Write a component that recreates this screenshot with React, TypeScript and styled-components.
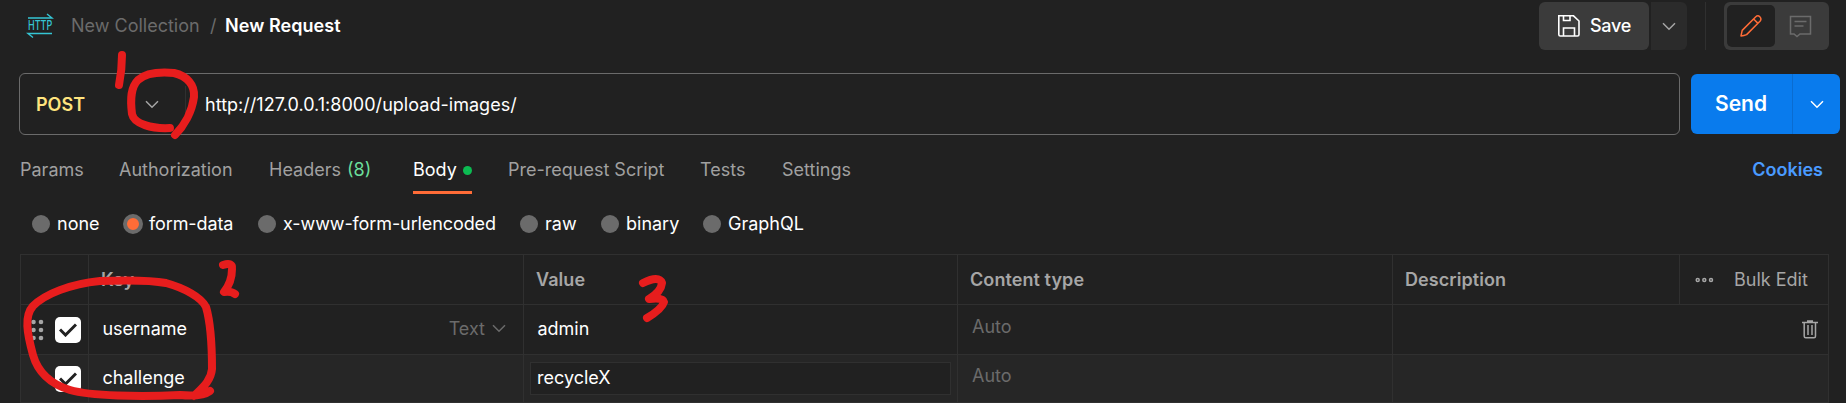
import React from "react";
import styled, { createGlobalStyle } from "styled-components";

const GlobalStyle = createGlobalStyle`
  *, *::before, *::after { box-sizing: border-box; }
  html, body { margin: 0; background: #212121; }
  body { overflow: hidden; }
`;

const Page = styled.main`
  position: relative;
  width: 1846px;
  height: 403px;
  overflow: hidden;
  background: #212121;
  color: #fff;
  font: 400 18px/24px Inter, sans-serif;
  white-space: nowrap;
`;

const Header = styled.header`
  display: flex;
  height: 50px;
  padding: 2px 17px 0 28px;
`;

const Breadcrumb = styled.nav`
  display: flex;
  flex: 1;
  align-items: center;
  height: 48px;
`;

const Crumb = styled.span<{ $width?: number; $current?: boolean }>`
  width: ${(p) => (p.$width ? `${p.$width}px` : "auto")};
  color: ${(p) => (p.$current ? "#fff" : "#6b6b6b")};
  font-weight: ${(p) => (p.$current ? 600 : 400)};
  letter-spacing: ${(p) => (p.$current ? "0.06px" : "0")};
`;

const HttpIcon = styled.svg`
  flex: none;
  width: 26px;
  height: 26px;
  margin-right: 17px;
  overflow: visible;
`;

const HeaderActions = styled.div`
  display: flex;
  align-items: flex-start;
`;

const SaveButton = styled.button`
  display: flex;
  align-items: center;
  gap: 9px;
  width: 110px;
  height: 48px;
  padding: 0 0 0 18px;
  border: 0;
  border-radius: 6px;
  background: #3b3b3b;
  color: #fff;
  font: 500 18px/24px Inter, sans-serif;
  letter-spacing: -0.3px;
`;

const SaveMenuButton = styled.button`
  display: grid;
  place-items: center;
  width: 36px;
  height: 48px;
  margin-left: 2px;
  padding: 0;
  border: 0;
  border-radius: 0 6px 6px 0;
  background: #2b2b2b;
`;

const HeaderDivider = styled.i`
  width: 1px;
  height: 48px;
  margin: 0 18px;
  background: #303030;
`;

const ModeSwitch = styled.div`
  display: flex;
  width: 105px;
  height: 48px;
  padding: 3px;
  border-radius: 6px;
  background: #3b3b3b;
`;

const ModeButton = styled.button<{ $active?: boolean }>`
  display: grid;
  place-items: center;
  width: ${(p) => (p.$active ? 48 : 52)}px;
  height: 42px;
  padding: 0;
  border: 0;
  border-radius: 5px;
  background: ${(p) => (p.$active ? "#212121" : "transparent")};
`;

const RequestBar = styled.section`
  display: flex;
  gap: 11px;
  height: 62px;
  margin: 23px 6px 0 19px;
`;

const UrlBox = styled.div`
  display: flex;
  align-items: center;
  width: 1661px;
  height: 62px;
  padding-left: 16px;
  border: 1px solid #6b6b6b;
  border-radius: 6px;
`;

const Method = styled.div`
  display: flex;
  align-items: center;
  width: 150px;
  height: 36px;
  border-right: 1px solid #303030;
  color: #ffe47e;
  font-weight: 600;
`;

const MethodName = styled.span`
  width: 109px;
  padding-top: 1px;
`;

const UrlText = styled.span`
  margin-left: 19px;
  padding-top: 2px;
  letter-spacing: 0.03px;
`;

const SendGroup = styled.div`
  display: flex;
  width: 149px;
  height: 60px;
  margin-top: 1px;
  overflow: hidden;
  border-radius: 6px;
  background: #097bed;
`;

const SendButton = styled.button`
  width: 101px;
  padding: 0 1px 0 0;
  border: 0;
  background: transparent;
  color: #fff;
  font: 600 21px/24px Inter, sans-serif;
`;

const SendMenuButton = styled.button`
  display: grid;
  flex: 1;
  place-items: center;
  padding: 0;
  border: 0;
  border-left: 1px solid #0a6cd0;
  background: transparent;
`;

const TabBar = styled.nav`
  display: flex;
  height: 59px;
  padding: 23px 0 0 20px;
`;

const Tab = styled.div<{ $slot: number }>`
  width: ${(p) => p.$slot}px;
  color: #a0a0a0;
`;

const TabCount = styled.span`
  margin-left: 6px;
  color: #6bdd9a;
`;

const ActiveTab = styled.div`
  display: flex;
  align-items: center;
  justify-content: space-between;
  width: 59px;
  height: 36px;
  margin-right: 36px;
  padding-bottom: 9px;
  border-bottom: 3px solid #ff6c37;
`;

const ChangedDot = styled.i`
  width: 9px;
  height: 9px;
  border-radius: 50%;
  background: #0cbb52;
`;

const Cookies = styled.a`
  margin-left: auto;
  padding-right: 23px;
  color: #4a9bff;
  font-weight: 600;
`;

const BodyTypes = styled.div`
  display: flex;
  align-items: center;
  height: 60px;
  padding-left: 32px;
`;

const BodyType = styled.label<{ $slot: number; $tight?: boolean }>`
  display: flex;
  align-items: center;
  gap: 7px;
  width: ${(p) => p.$slot}px;
  letter-spacing: ${(p) => (p.$tight ? "-0.1px" : "0")};
`;

const Radio = styled.i<{ $checked?: boolean }>`
  flex: none;
  width: ${(p) => (p.$checked ? 20 : 18)}px;
  height: ${(p) => (p.$checked ? 20 : 18)}px;
  margin: ${(p) => (p.$checked ? "0 -1px" : "0")};
  border: ${(p) => (p.$checked ? "4px solid #6b6b6b" : "0")};
  border-radius: 50%;
  background: ${(p) => (p.$checked ? "#ff6c37" : "#6b6b6b")};
`;

const Table = styled.section`
  width: 1809px;
  margin-left: 20px;
  border: 1px solid #303030;
  border-bottom: 0;
`;

const Row = styled.div<{ $height: number; $shaded?: boolean; $trailing?: boolean }>`
  display: grid;
  grid-template-columns: 68px 435px 434px 435px ${(p) => (p.$trailing ? "287px 1fr" : "1fr")};
  height: ${(p) => p.$height}px;
  border-bottom: 1px solid #303030;
  background: ${(p) => (p.$shaded ? "#262626" : "#212121")};
`;

const Cell = styled.div<{ $last?: boolean; $pad?: number; $tone?: string; $bold?: boolean; $lift?: number }>`
  display: flex;
  align-items: center;
  padding: 0 0 ${(p) => p.$lift ?? 0}px ${(p) => p.$pad ?? 0}px;
  border-right: ${(p) => (p.$last ? "0" : "1px solid #303030")};
  color: ${(p) => p.$tone ?? "#fff"};
  font-weight: ${(p) => (p.$bold ? 600 : 400)};
  letter-spacing: ${(p) => (p.$bold ? "0.08px" : "0")};
`;

const HandleSlot = styled.span`
  display: flex;
  width: 24px;
  height: 22px;
`;

const Checkbox = styled.span`
  display: grid;
  place-items: center;
  width: 26px;
  height: 26px;
  border-radius: 5px;
  background: #fff;
`;

const FieldType = styled.span`
  display: flex;
  align-items: center;
  gap: 7px;
  margin-left: auto;
  padding-right: 17px;
  color: #6b6b6b;
`;

const ValueInput = styled.div`
  display: flex;
  align-items: center;
  width: 421px;
  height: 33px;
  padding-left: 6px;
  border: 1px solid #303030;
  background: #212121;
`;

const BulkEdit = styled.span`
  margin-left: 20px;
`;

const Trash = styled.svg`
  margin: 0 10px 0 auto;
`;

const Annotations = styled.svg`
  position: absolute;
  inset: 0;
  pointer-events: none;
`;

const Chevron = ({ color = "#a6a6a6" }: { color?: string }) => (
  <svg width="14" height="9" viewBox="0 0 14 9" fill="none" stroke={color} strokeWidth="1.5">
    <path d="M1 1.2 7 7.2 13 1.2" />
  </svg>
);

const Check = () => (
  <svg width="18" height="14" viewBox="0 0 18 14" fill="none" stroke="#212121" strokeWidth="3">
    <path d="M1 6.5 6.5 12 17 1.5" />
  </svg>
);

const DragHandle = () => (
  <svg width="14" height="22" viewBox="0 0 14 22" fill="#a6a6a6">
    {[3, 11, 19].map((y) => (
      <React.Fragment key={y}>
        <circle cx="2.5" cy={y} r="2.3" />
        <circle cx="10" cy={y} r="2.3" />
      </React.Fragment>
    ))}
  </svg>
);

const bodyTypes = [
  { name: "none", slot: 92 },
  { name: "form-data", slot: 134, checked: true, tight: true },
  { name: "x-www-form-urlencoded", slot: 262, tight: true },
  { name: "raw", slot: 81 },
  { name: "binary", slot: 102 },
  { name: "GraphQL", slot: 110 },
];

export default function App() {
  return (
    <Page>
      <GlobalStyle />
      <Header>
        <Breadcrumb>
          <HttpIcon viewBox="0 0 26 26" fill="none" stroke="#35c5d4" strokeWidth="1.4">
            <path d="M0 5H24L19 1M24 20.5H0L5 24.5" />
            <text
              transform="translate(0 17.4) scale(0.72 1)"
              fill="#35c5d4"
              stroke="none"
              fontSize="12.5"
              fontWeight="500"
            >
              HTTP
            </text>
          </HttpIcon>
          <Crumb $width={139}>New Collection</Crumb>
          <Crumb $width={15}>/</Crumb>
          <Crumb $current>New Request</Crumb>
        </Breadcrumb>
        <HeaderActions>
          <SaveButton>
            <svg width="24" height="24" viewBox="0 0 24 24" fill="none" stroke="#fff" strokeWidth="1.6">
              <path d="M2 1.8H16.5L22 7V20.5Q22 22 20.5 22H3.3Q1.8 22 1.8 20.5V1.8ZM6.5 2V6.5H13V2M6.5 22V14H17.5V22" />
            </svg>
            Save
          </SaveButton>
          <SaveMenuButton><Chevron /></SaveMenuButton>
          <HeaderDivider />
          <ModeSwitch>
            <ModeButton $active>
              <svg width="24" height="24" viewBox="0 0 24 24" fill="none" stroke="#ff6c37" strokeWidth="1.5" strokeLinejoin="round">
                <path d="M2 22 3.2 16.4 16.8 2.8Q18.8.8 20.8 2.8T21.2 7L7.6 20.6Q5 21.6 2 22ZM14.6 5 19 9.4" />
              </svg>
            </ModeButton>
            <ModeButton>
              <svg width="24" height="24" viewBox="0 0 24 24" fill="none" stroke="#6b6b6b" strokeWidth="1.5">
                <path d="M2.5 2.5H22.5V20H12L9 22.5 6 20H2.5ZM6.5 7.5H18.5M6.5 12H15.5" />
              </svg>
            </ModeButton>
          </ModeSwitch>
        </HeaderActions>
      </Header>

      <RequestBar>
        <UrlBox>
          <Method>
            <MethodName>POST</MethodName>
            <Chevron />
          </Method>
          <UrlText>http://127.0.0.1:8000/upload-images/</UrlText>
        </UrlBox>
        <SendGroup>
          <SendButton>Send</SendButton>
          <SendMenuButton><Chevron color="#fff" /></SendMenuButton>
        </SendGroup>
      </RequestBar>

      <TabBar>
        <Tab $slot={99}>Params</Tab>
        <Tab $slot={150}>Authorization</Tab>
        <Tab $slot={144}>Headers<TabCount>(8)</TabCount></Tab>
        <ActiveTab>Body<ChangedDot /></ActiveTab>
        <Tab $slot={192}>Pre-request Script</Tab>
        <Tab $slot={82}>Tests</Tab>
        <Tab $slot={80}>Settings</Tab>
        <Cookies>Cookies</Cookies>
      </TabBar>

      <BodyTypes>
        {bodyTypes.map((t) => (
          <BodyType key={t.name} $slot={t.slot} $tight={t.tight}>
            <Radio $checked={t.checked} />
            {t.name}
          </BodyType>
        ))}
      </BodyTypes>

      <Table>
        <Row $height={50} $trailing>
          <Cell />
          <Cell $pad={12} $tone="#a6a6a6" $bold>Key</Cell>
          <Cell $pad={12} $tone="#a6a6a6" $bold>Value</Cell>
          <Cell $pad={12} $tone="#a6a6a6" $bold>Content type</Cell>
          <Cell $pad={12} $tone="#a6a6a6" $bold>Description</Cell>
          <Cell $pad={15} $tone="#a6a6a6" $last>
            <svg width="19" height="6" viewBox="0 0 19 6" fill="none" stroke="#a6a6a6" strokeWidth="1.5">
              <circle cx="2.7" cy="3" r="1.5" />
              <circle cx="9.3" cy="3" r="1.5" />
              <circle cx="16" cy="3" r="1.5" />
            </svg>
            <BulkEdit>Bulk Edit</BulkEdit>
          </Cell>
        </Row>
        <Row $height={50}>
          <Cell $pad={10}>
            <HandleSlot><DragHandle /></HandleSlot>
            <Checkbox><Check /></Checkbox>
          </Cell>
          <Cell $pad={13.4} $lift={2}>
            username
            <FieldType>Text<Chevron color="#6b6b6b" /></FieldType>
          </Cell>
          <Cell $pad={13.4} $lift={2}>admin</Cell>
          <Cell $pad={14} $tone="#6b6b6b" $lift={5}>Auto</Cell>
          <Cell $last>
            <Trash width="16" height="19" viewBox="0 0 16 19" fill="none" stroke="#a6a6a6" strokeWidth="1.5">
              <path d="M0 2.5H16M5 1H11M2.2 3V16.3Q2.2 17.8 3.7 17.8H12Q13.5 17.8 13.5 16.3V3M6 5V15M10 5V15" />
            </Trash>
          </Cell>
        </Row>
        <Row $height={48} $shaded>
          <Cell $pad={10}>
            <HandleSlot />
            <Checkbox><Check /></Checkbox>
          </Cell>
          <Cell $pad={13.4} $lift={1}>challenge</Cell>
          <Cell $pad={6} $lift={1}><ValueInput>recycleX</ValueInput></Cell>
          <Cell $pad={14} $tone="#6b6b6b" $lift={5}>Auto</Cell>
          <Cell $last />
        </Row>
      </Table>

      <Annotations width="1846" height="403" fill="none" stroke="#e71d1d" strokeWidth="8" strokeLinecap="round" strokeLinejoin="round">
        <path d="M122 55Q122 70 119 85" />
        <path d="M170 128C152 129 134 124 132 114C130 98 131 87 138 80C147 72 163 72 174 73C187 76 195 85 194 97C192 112 184 126 175 135" />
        <path d="M223 265Q233 262 232 269Q232 282 224 292Q231 291 235 294" />
        <path d="M210 391Q202 397 180 395C140 397 90 396 70 390C47 383 37 369 33 355C27 333 24 316 33 306C45 294 70 284 100 281C126 280 150 280 166 283C184 288 201 297 206 307C211 324 212 350 212 369C211 381 202 388 194 396" />
        <path d="M643 283Q659 275 662 283Q661 292 649 299Q663 297 664 302Q662 309 647 318" />
      </Annotations>
    </Page>
  );
}
